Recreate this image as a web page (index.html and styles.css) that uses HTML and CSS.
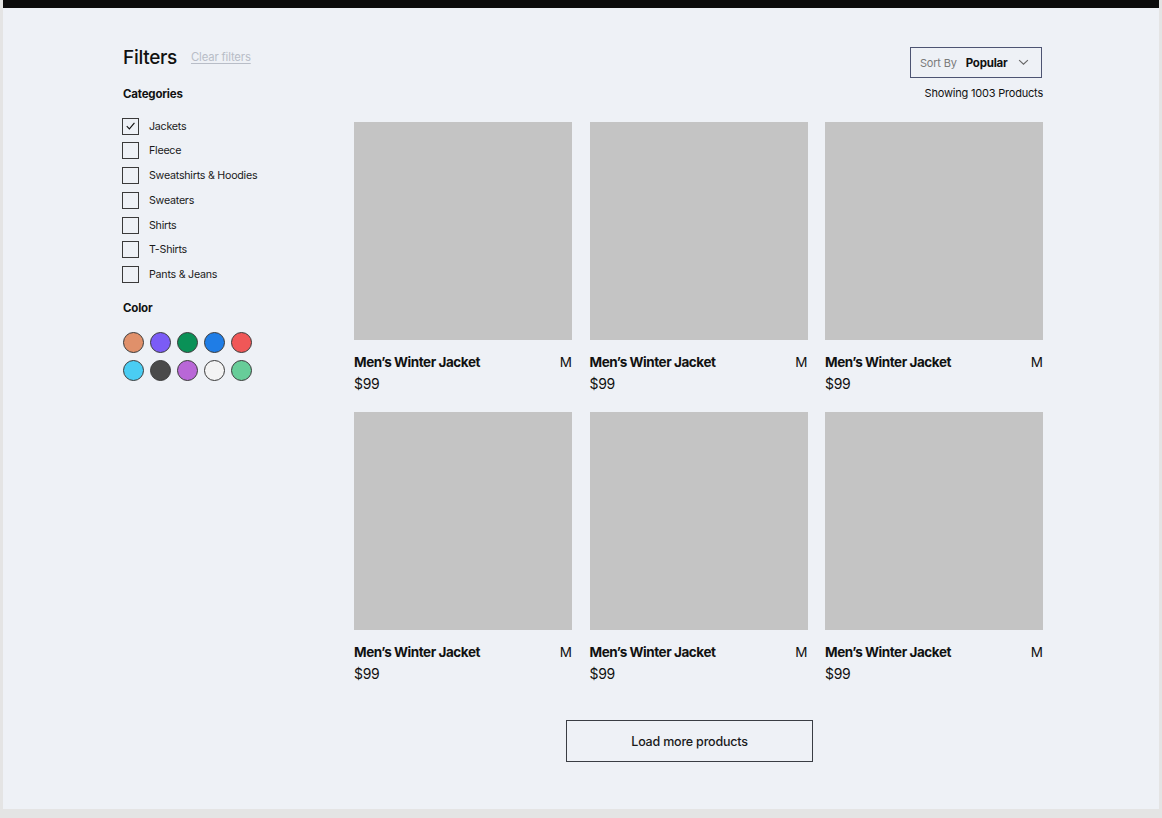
FILE: index.html
```html
<!DOCTYPE html>
<html lang="en">
<head>
<meta charset="utf-8">
<title>Products</title>
<link rel="stylesheet" href="styles.css">
</head>
<body>
<div class="frame">
  <div class="topbar"></div>
  <div class="container">
    <aside class="sidebar">
      <div class="filters-head">
        <h1 class="filters-title">Filters</h1>
        <a class="clear-link" href="#">Clear filters</a>
      </div>
      <h2 class="section-title">Categories</h2>
      <ul class="cat-list">
        <li class="cat-item"><span class="checkbox checked"><svg viewBox="0 0 16 16" width="16" height="16"><path d="M4 8.2 L6.8 11 L12.2 4.6" fill="none" stroke="#111" stroke-width="1.2"/></svg></span>Jackets</li>
        <li class="cat-item"><span class="checkbox"></span>Fleece</li>
        <li class="cat-item"><span class="checkbox"></span>Sweatshirts &amp; Hoodies</li>
        <li class="cat-item"><span class="checkbox"></span>Sweaters</li>
        <li class="cat-item"><span class="checkbox"></span>Shirts</li>
        <li class="cat-item"><span class="checkbox"></span>T-Shirts</li>
        <li class="cat-item"><span class="checkbox"></span>Pants &amp; Jeans</li>
      </ul>
      <h2 class="section-title color-title">Color</h2>
      <div class="swatches">
        <span class="swatch c-orange"></span>
        <span class="swatch c-violet"></span>
        <span class="swatch c-green"></span>
        <span class="swatch c-blue"></span>
        <span class="swatch c-red"></span>
        <span class="swatch c-cyan"></span>
        <span class="swatch c-dark"></span>
        <span class="swatch c-purple"></span>
        <span class="swatch c-white"></span>
        <span class="swatch c-mint"></span>
      </div>
    </aside>
    <main class="main">
      <div class="sort-row">
        <div class="sort-box">
          <span class="sort-label">Sort By</span>
          <span class="sort-value">Popular</span>
          <svg class="chevron" viewBox="0 0 12 8" width="11" height="7"><path d="M1 1.2 L6 6 L11 1.2" fill="none" stroke="#666" stroke-width="1.3"/></svg>
        </div>
      </div>
      <p class="count">Showing 1003 Products</p>
      <div class="grid">
        <div class="card"><div class="thumb"></div><div class="card-row"><span class="card-title">Men’s Winter Jacket</span><span class="card-size">M</span></div><div class="card-price">$99</div></div>
        <div class="card"><div class="thumb"></div><div class="card-row"><span class="card-title">Men’s Winter Jacket</span><span class="card-size">M</span></div><div class="card-price">$99</div></div>
        <div class="card"><div class="thumb"></div><div class="card-row"><span class="card-title">Men’s Winter Jacket</span><span class="card-size">M</span></div><div class="card-price">$99</div></div>
        <div class="card"><div class="thumb"></div><div class="card-row"><span class="card-title">Men’s Winter Jacket</span><span class="card-size">M</span></div><div class="card-price">$99</div></div>
        <div class="card"><div class="thumb"></div><div class="card-row"><span class="card-title">Men’s Winter Jacket</span><span class="card-size">M</span></div><div class="card-price">$99</div></div>
        <div class="card"><div class="thumb"></div><div class="card-row"><span class="card-title">Men’s Winter Jacket</span><span class="card-size">M</span></div><div class="card-price">$99</div></div>
      </div>
      <button class="load-more" type="button">Load more products</button>
    </main>
  </div>
</div>
</body>
</html>
```
FILE: styles.css
```css
* { box-sizing: border-box; }
html, body { margin: 0; padding: 0; }
body {
  background: #e4e4e4;
  font-family: "Inter", "Liberation Sans", sans-serif;
  color: #111;
  width: 1162px;
  height: 818px;
  overflow: hidden;
}
.frame {
  width: 1156px;
  height: 809px;
  margin-left: 3px;
  background: #eef1f6;
}
.topbar { height: 8px; background: #0c0c0c; }
.container {
  display: flex;
  padding-top: 37px;
  padding-left: 120px;
}
.sidebar { width: 231px; flex: none; padding-top: 2px; }
.filters-head { display: flex; align-items: center; gap: 14px; height: 22px; }
.filters-title { margin: 0; font-size: 19px; line-height: 22px; font-weight: 500; letter-spacing: -0.3px; }
.clear-link { font-size: 11.3px; line-height: 14px; color: #b8bdc7; text-decoration: underline; text-underline-offset: 2px; letter-spacing: -0.15px; margin-top: -2px; }
.section-title { margin: 0; font-size: 11.5px; line-height: 16px; font-weight: 700; letter-spacing: -0.2px; }
.filters-head + .section-title { margin-top: 17px; }
.cat-list { list-style: none; margin: 16px 0 0; padding: 0; }
.cat-item {
  display: flex; align-items: center; height: 16px; margin-bottom: 8.8px;
  font-size: 10.7px; letter-spacing: -0.25px; color: #1a1a1a;
}
.checkbox {
  width: 17px; height: 17px; border: 1px solid #3a3a3a; margin-right: 10px; margin-left: -1px; flex: none;
  display: flex; align-items: center; justify-content: center; background: transparent;
}
.checkbox svg { display: block; }
.color-title { margin-top: 17px; }
.swatches {
  display: grid; grid-template-columns: repeat(5, 21px); column-gap: 6px; row-gap: 7px;
  margin-top: 16px;
}
.swatch { width: 21px; height: 21px; border-radius: 50%; border: 1px solid #3a3a3a; display: block; }
.c-orange { background: #e0906a; }
.c-violet { background: #7b5cf6; }
.c-green { background: #0a9157; }
.c-blue { background: #1f7de6; }
.c-red { background: #f05757; }
.c-cyan { background: #4acdf3; }
.c-dark { background: #4a4a4a; }
.c-purple { background: #b967d7; }
.c-white { background: #f3f3f3; }
.c-mint { background: #67cd99; }

.main { width: 689px; flex: none; }
.sort-row { display: flex; justify-content: flex-end; padding-right: 1px; margin-top: 2px; }
.sort-box {
  width: 132px; height: 31px; border: 1px solid #4d5472;
  display: flex; align-items: center; padding-left: 9px;
}
.sort-label { font-size: 11px; color: #7a7a7a; letter-spacing: -0.2px; }
.sort-value { font-size: 11.5px; font-weight: 700; margin-left: 9px; letter-spacing: -0.2px; }
.chevron { margin-left: 10px; display: block; }
.count {
  margin: 7px 0 0; text-align: right; font-size: 11px; line-height: 16px; letter-spacing: -0.2px; color: #111;
}
.grid {
  display: grid; grid-template-columns: repeat(3, 1fr); column-gap: 17.5px; row-gap: 18px;
  margin-top: 21px;
}
.thumb { height: 218px; background: #c4c4c4; }
.card-row { display: flex; justify-content: space-between; margin-top: 12px; line-height: 20px; }
.card-title { font-size: 13.5px; font-weight: 700; letter-spacing: -0.45px; }
.card-size { font-size: 13.5px; font-weight: 400; }
.card-price { margin-top: 2px; font-size: 14px; line-height: 20px; letter-spacing: -0.3px; }
.load-more {
  display: block; margin: 36px 0 0 212px; width: 247px; height: 42px;
  border: 1px solid #3a3d44; background: transparent;
  font-family: inherit; font-size: 12.5px; font-weight: 500; color: #1a1a1a; letter-spacing: -0.2px;
}
```
